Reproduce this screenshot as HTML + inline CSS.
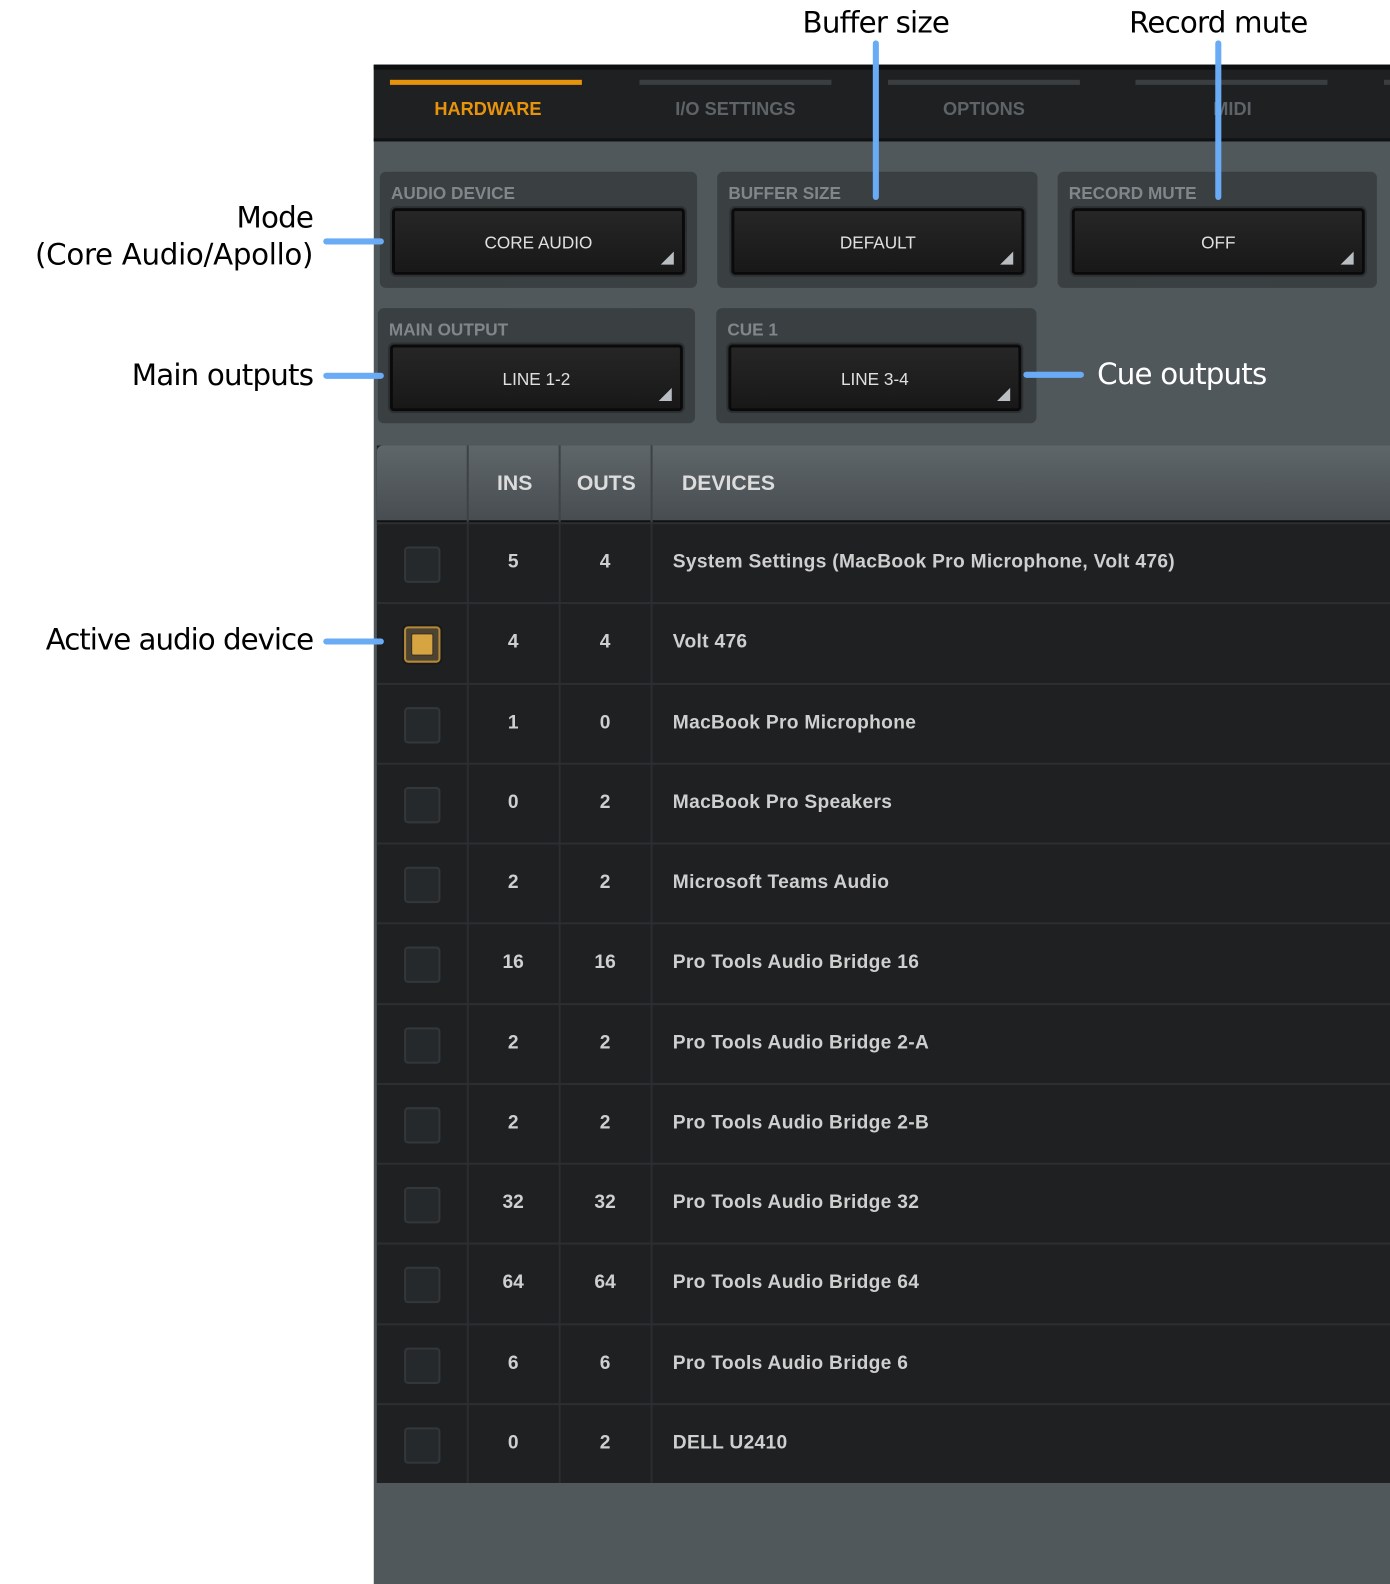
<!DOCTYPE html>
<html><head><meta charset="utf-8"><style>
*{margin:0;padding:0;box-sizing:border-box}
html,body{width:1390px;height:1584px;overflow:hidden;background:#fff}
#w{position:absolute;left:0;top:0;width:1376px;height:1568px;transform:scale(1.0102);transform-origin:0 0;font-family:"Liberation Sans",sans-serif}
.ann{position:absolute;font-family:"DejaVu Sans","Liberation Sans",sans-serif;font-size:29px;color:#000;letter-spacing:-0.8px;white-space:nowrap;line-height:37px}
.bl{position:absolute;background:#6aabf6;border-radius:3px}
#panel{position:absolute;left:370px;top:64px;width:1006px;height:1504px;background:#50585b}
#tabs{position:absolute;left:0;top:0;width:1006px;height:76px;background:#1f2021;border-top:5px solid #0e0f10;border-bottom:3px solid #101112}
.ind{position:absolute;top:10px;height:5px;background:#3b3e41}
.tl{position:absolute;top:29px;font-weight:bold;font-size:18px;color:#5e6367;transform:translateX(-50%);white-space:nowrap}
.box{position:absolute;background:#3a3f42;border-radius:6px}
.lab{position:absolute;left:11px;top:12px;font-weight:bold;font-size:17px;color:#80868a}
.btn{position:absolute;background:linear-gradient(#262626,#181818);border:3px solid #0a0a0a;box-shadow:0 0 0 2px #2c3033;border-radius:4px;color:#e0e0e0;font-size:17px;text-align:center}
.tri{position:absolute;right:8px;bottom:7px;width:0;height:0;border-left:13px solid transparent;border-bottom:13px solid #b9bec2}
#tbl{position:absolute;left:3px;top:377px;width:1003px;height:1027px;background:#1e2022}
#hdr{position:absolute;left:0;top:0;width:1003px;height:76px;background:linear-gradient(#5f666a,#474d50);border-radius:6px 0 0 0;border-bottom:2px solid #111}
.vl{position:absolute;top:0;width:2px;height:1027px;background:#2b2e31}
.hv{position:absolute;top:0;width:2px;height:76px;background:#3c4245}
.ht{position:absolute;top:26px;font-weight:bold;font-size:21px;color:#dcdcdc}
.row{position:absolute;left:0;width:1003px;height:79.25px;border-top:2px solid #2c2f32}
.cb{position:absolute;left:27px;top:22px;width:36px;height:36px;background:#26292c;border:2px solid #33373a;border-radius:4px}
.n{position:absolute;top:27px;width:60px;text-align:center;font-weight:bold;font-size:19px;color:#cfcfcf}
.d{position:absolute;left:293px;top:27px;font-weight:bold;font-size:19px;color:#cfcfcf;white-space:nowrap;letter-spacing:0.3px}
</style></head><body><div id="w">
<div id="panel">
 <div id="tabs">
  <div class="ind" style="left:16px;width:190px;background:#e8930c"></div>
  <div class="ind" style="left:263px;width:190px"></div>
  <div class="ind" style="left:509px;width:190px"></div>
  <div class="ind" style="left:754px;width:190px"></div>
  <div class="ind" style="left:1000px;width:10px"></div>
  <div class="tl" style="left:113px;color:#e8930c">HARDWARE</div>
  <div class="tl" style="left:358px">I/O SETTINGS</div>
  <div class="tl" style="left:604px">OPTIONS</div>
  <div class="tl" style="left:850px">MIDI</div>
 </div>
 <div class="box" style="left:6px;top:106px;width:314px;height:115px"><div class="lab">AUDIO DEVICE</div><div class="btn" style="left:12px;top:36px;width:290px;height:66px;line-height:64px">CORE AUDIO<div class="tri"></div></div></div>
 <div class="box" style="left:340px;top:106px;width:317px;height:115px"><div class="lab">BUFFER SIZE</div><div class="btn" style="left:14px;top:36px;width:290px;height:66px;line-height:64px">DEFAULT<div class="tri"></div></div></div>
 <div class="box" style="left:677px;top:106px;width:316px;height:115px"><div class="lab">RECORD MUTE</div><div class="btn" style="left:14px;top:36px;width:290px;height:66px;line-height:64px">OFF<div class="tri"></div></div></div>
 <div class="box" style="left:4px;top:241px;width:314px;height:114px"><div class="lab">MAIN OUTPUT</div><div class="btn" style="left:12px;top:36px;width:290px;height:66px;line-height:64px">LINE 1-2<div class="tri"></div></div></div>
 <div class="box" style="left:339px;top:241px;width:317px;height:114px"><div class="lab">CUE 1</div><div class="btn" style="left:12px;top:36px;width:290px;height:66px;line-height:64px">LINE 3-4<div class="tri"></div></div></div>
 <div id="tbl">
  <div class="vl" style="left:89px"></div><div class="vl" style="left:180px"></div><div class="vl" style="left:271px"></div>
  <div id="hdr">
   <div class="hv" style="left:89px"></div><div class="hv" style="left:180px"></div><div class="hv" style="left:271px"></div>
   <div class="ht" style="left:119px">INS</div><div class="ht" style="left:198px">OUTS</div><div class="ht" style="left:302px">DEVICES</div>
  </div>
  <div class="row" style="top:76px"><div class="cb"></div><div class="n" style="left:105px">5</div><div class="n" style="left:196px">4</div><div class="d">System Settings (MacBook Pro Microphone, Volt 476)</div></div>
  <div class="row" style="top:155px"><div class="cb" style="background:#4d4332;border:2px solid #b48a38;box-shadow:0 0 0 2px #1a1a1a"><div style="position:absolute;left:5px;top:5px;width:22px;height:22px;background:#d6a441;border:1px solid #3a3020;border-radius:2px"></div></div><div class="n" style="left:105px">4</div><div class="n" style="left:196px">4</div><div class="d">Volt 476</div></div>
  <div class="row" style="top:234.5px"><div class="cb"></div><div class="n" style="left:105px">1</div><div class="n" style="left:196px">0</div><div class="d">MacBook Pro Microphone</div></div>
  <div class="row" style="top:313.75px"><div class="cb"></div><div class="n" style="left:105px">0</div><div class="n" style="left:196px">2</div><div class="d">MacBook Pro Speakers</div></div>
  <div class="row" style="top:393px"><div class="cb"></div><div class="n" style="left:105px">2</div><div class="n" style="left:196px">2</div><div class="d">Microsoft Teams Audio</div></div>
  <div class="row" style="top:472.25px"><div class="cb"></div><div class="n" style="left:105px">16</div><div class="n" style="left:196px">16</div><div class="d">Pro Tools Audio Bridge 16</div></div>
  <div class="row" style="top:551.5px"><div class="cb"></div><div class="n" style="left:105px">2</div><div class="n" style="left:196px">2</div><div class="d">Pro Tools Audio Bridge 2-A</div></div>
  <div class="row" style="top:630.75px"><div class="cb"></div><div class="n" style="left:105px">2</div><div class="n" style="left:196px">2</div><div class="d">Pro Tools Audio Bridge 2-B</div></div>
  <div class="row" style="top:710px"><div class="cb"></div><div class="n" style="left:105px">32</div><div class="n" style="left:196px">32</div><div class="d">Pro Tools Audio Bridge 32</div></div>
  <div class="row" style="top:789.25px"><div class="cb"></div><div class="n" style="left:105px">64</div><div class="n" style="left:196px">64</div><div class="d">Pro Tools Audio Bridge 64</div></div>
  <div class="row" style="top:868.5px"><div class="cb"></div><div class="n" style="left:105px">6</div><div class="n" style="left:196px">6</div><div class="d">Pro Tools Audio Bridge 6</div></div>
  <div class="row" style="top:947.75px"><div class="cb"></div><div class="n" style="left:105px">0</div><div class="n" style="left:196px">2</div><div class="d">DELL U2410</div></div>
 </div>
</div>
<div class="ann" style="right:1066px;top:197px;text-align:right">Mode<br><span style="letter-spacing:-0.3px">(Core Audio/Apollo)</span></div>
<div class="bl" style="left:320px;top:236px;width:60px;height:6px"></div>
<div class="ann" style="right:1066px;top:353px">Main outputs</div>
<div class="bl" style="left:320px;top:369px;width:60px;height:6px"></div>
<div class="ann" style="right:1066px;top:615px;letter-spacing:-1px">Active audio device</div>
<div class="bl" style="left:320px;top:632px;width:60px;height:6px"></div>
<div class="ann" style="left:867px;top:4px;transform:translateX(-50%)">Buffer size</div>
<div class="bl" style="left:864px;top:40px;width:6px;height:158px"></div>
<div class="ann" style="left:1206px;top:4px;transform:translateX(-50%)">Record mute</div>
<div class="bl" style="left:1203px;top:40px;width:6px;height:158px"></div>
<div class="ann" style="left:1086px;top:352px;color:#fff">Cue outputs</div>
<div class="bl" style="left:1013px;top:368px;width:60px;height:6px"></div>
</div></body></html>
